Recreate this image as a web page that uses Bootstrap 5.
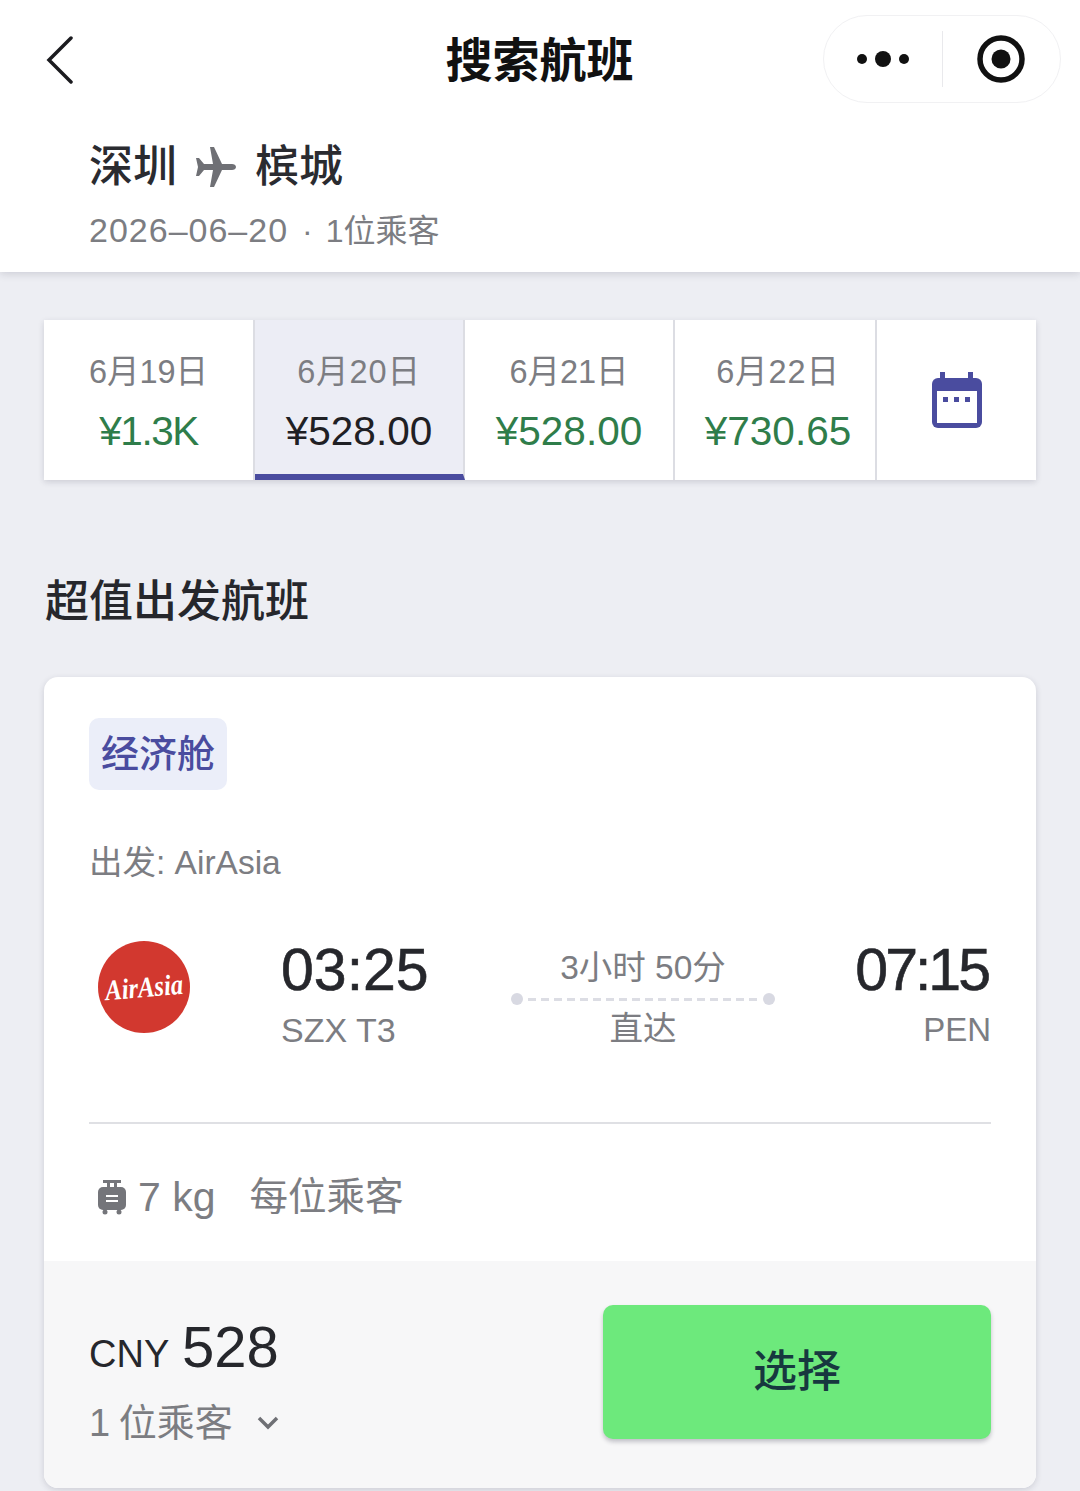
<!DOCTYPE html>
<html lang="zh-CN">
<head>
<meta charset="utf-8">
<title>搜索航班</title>
<link rel="stylesheet" href="https://cdn.jsdelivr.net/npm/bootstrap@5.3.0/dist/css/bootstrap.min.css">
<style>
html,body{height:1491px;overflow:hidden}
body{background:#edeef3;font-family:"Liberation Sans","Noto Sans CJK SC",sans-serif;color:#1f2024}
.hdr{background:#fff;height:272px;box-shadow:0 2px 8px rgba(40,40,60,.16)}
.topbar{height:137px;padding:15px 19px 0 46px}
.back-col{width:212px;height:90px}
.ttl{flex:1;text-align:center;font-size:47px;font-weight:700;color:#111;line-height:92px;margin-left:-2px}
.capsule{width:238px;height:88px;border:1px solid #f1f1f3;border-radius:44px}
.cap-l{width:119px;height:56px;border-right:1px solid #e9e9ec}
.cap-r{width:118px}
.route{padding-left:89px;font-size:44px;font-weight:500;line-height:60px;color:#2a2b30;gap:19px}
.sub{padding-left:89px;font-size:32px;color:#7c7d82;line-height:44px;margin-top:11px}
.sub-date{font-size:34px;letter-spacing:1px}
.sub-dot{margin:0 13px 0 14px}
.strip{margin:48px 44px 0;height:160px;background:#fff;box-shadow:0 2px 6px rgba(40,40,60,.16)}
.dcell{height:160px;border-right:2px solid #dcdde3;text-align:center;padding-top:30px}
.w1{width:211px}.w2{width:210px}.w3{width:210px}.w4{width:202px;padding-left:6px}
.w5{width:159px;height:160px}
.dcell.on{background:#ecedf5;border-bottom:6px solid #4a4c9f}
.dday{font-size:32.500px;line-height:44px;color:#7c7d82}
.dday-wide{letter-spacing:.9px}
.dprice{font-size:40.500px;line-height:50px;margin-top:12px;color:#2f7d4a}
.dprice-tight{letter-spacing:-1.500px}
.on .dprice{color:#1f2024}
.sect{margin:94px 0 0 45px;font-size:44px;font-weight:500;line-height:56px;color:#26272c}
.fcard{margin:47px 44px 0;height:811px;background:#fff;border-radius:14px;box-shadow:0 2px 6px rgba(40,40,60,.16);overflow:hidden}
.fbody{padding:41px 45px 0;height:584px}
.cabin{width:138px;height:72px;background:#ebeef9;color:#4a4c9f;font-size:38px;font-weight:500;line-height:72px;text-align:center;border-radius:10px}
.op{font-size:33.500px;line-height:44px;color:#7c7d82;margin-top:51px}
.times{margin-top:53px;height:120px}
.logo-col{width:192px;padding:2px 0 0 8px}
.dep-col{width:230px}
.tm{font-size:59px;line-height:64px;color:#26272c;-webkit-text-stroke:.6px #26272c}
.tm-tight{letter-spacing:-3px;margin-right:3px}
.ap{font-size:34px;line-height:44px;color:#7c7d82;margin-top:6px}
.ap-small{font-size:33px}
.mid-col{width:264px;text-align:center;font-size:33.500px;line-height:44px;color:#7c7d82;padding-top:8px}
.dotline{height:14px;margin:2px 0 1px}
.ddot{width:12px;height:12px;border-radius:50%;background:#d8d9e2}
.dash{height:3px;margin:0 5px;background:repeating-linear-gradient(90deg,#dcdde4 0 8px,transparent 8px 13px)}
.arr-col{width:216px;text-align:right}
.rule{border-top:2px solid #dfe0e4;margin-top:64px}
.bag{margin:48px 0 0 8px;font-size:41px;line-height:50px;color:#7c7d82}
.bag-icon{margin-right:11px}
.bag-txt{margin-left:34px;font-size:38.500px}
.ffoot{height:227px;background:#f7f7f8;padding:44px 45px 0}
.cny{font-size:38px;line-height:60px;color:#26272c;margin-top:12px}
.cny b{font-size:58px;font-weight:400;margin-left:3px}
.pax{font-size:38px;line-height:50px;color:#7c7d82;margin-top:14px;word-spacing:-2px}
.pick{width:388px;height:134px;background:#6de97c;border:0;border-radius:10px;box-shadow:0 3px 4px rgba(40,40,60,.25);font-size:44px;font-weight:500;color:#17383f}
.pick:hover,.pick:active{background:#6de97c!important;color:#17383f!important}
</style>
</head>
<body>
<div class="hdr">
  <div class="topbar d-flex align-items-start">
    <div class="back-col d-flex align-items-center">
      <svg width="30" height="48" viewBox="0 0 30 48"><path d="M25 2 3 24l22 22" fill="none" stroke="#1b1b1f" stroke-width="3.500" stroke-linecap="round"/></svg>
    </div>
    <div class="ttl">搜索航班</div>
    <div class="capsule d-flex align-items-center">
      <div class="cap-l d-flex align-items-center justify-content-center">
        <svg width="54" height="20" viewBox="0 0 54 20"><circle cx="6" cy="10" r="5" fill="#111"/><circle cx="27" cy="10" r="8" fill="#111"/><circle cx="48" cy="10" r="5" fill="#111"/></svg>
      </div>
      <div class="cap-r d-flex align-items-center justify-content-center">
        <svg width="48" height="48" viewBox="0 0 48 48"><circle cx="24" cy="24" r="21" fill="none" stroke="#111" stroke-width="5.500"/><circle cx="24" cy="24" r="9.500" fill="#111"/></svg>
      </div>
    </div>
  </div>
  <div class="route d-flex align-items-center">
    <span>深圳</span>
    <svg width="40" height="40" viewBox="0 0 40 40"><path d="M40 20c0-2-2-3-4-3H26L18 0h-4l3 17H8L3 11H0l2 9-2 9h3l5-6h9l-3 17h4l8-17h10c2 0 4-1 4-3z" fill="#6f7075"/></svg>
    <span>槟城</span>
  </div>
  <div class="sub"><span class="sub-date">2026–06–20</span><span class="sub-dot">·</span><span>1位乘客</span></div>
</div>

<div class="strip d-flex">
  <div class="dcell w1"><div class="dday">6月19日</div><div class="dprice dprice-tight">¥1.3K</div></div>
  <div class="dcell w2 on"><div class="dday dday-wide">6月20日</div><div class="dprice">¥528.00</div></div>
  <div class="dcell w3"><div class="dday">6月21日</div><div class="dprice">¥528.00</div></div>
  <div class="dcell w4"><div class="dday dday-wide">6月22日</div><div class="dprice">¥730.65</div></div>
  <div class="w5 d-flex align-items-center justify-content-center">
    <svg width="50" height="56" viewBox="0 0 50 56"><rect x="8" y="0" width="5" height="9" fill="#4a4c9f"/><rect x="36" y="0" width="5" height="9" fill="#4a4c9f"/><rect x="0" y="6" width="50" height="50" rx="6" fill="#4a4c9f"/><rect x="5" y="19" width="40" height="32" fill="#fff"/><rect x="11" y="25" width="5" height="5" fill="#4a4c9f"/><rect x="22" y="25" width="5" height="5" fill="#4a4c9f"/><rect x="33" y="25" width="5" height="5" fill="#4a4c9f"/></svg>
  </div>
</div>

<div class="sect">超值出发航班</div>

<div class="fcard">
  <div class="fbody">
    <div class="cabin">经济舱</div>
    <div class="op">出发: AirAsia</div>
    <div class="times d-flex">
      <div class="logo-col">
        <svg width="94" height="94" viewBox="0 0 94 94" overflow="visible"><circle cx="47" cy="47" r="46" fill="#d2382f"/><text x="47" y="57" text-anchor="middle" font-family="Liberation Serif" font-style="italic" font-weight="700" font-size="29" fill="#fff" textLength="78" lengthAdjust="spacingAndGlyphs" transform="rotate(-5 47 47)">AirAsia</text></svg>
      </div>
      <div class="dep-col"><div class="tm">03:25</div><div class="ap">SZX T3</div></div>
      <div class="mid-col">
        <div>3小时 50分</div>
        <div class="dotline d-flex align-items-center"><span class="ddot"></span><span class="dash flex-grow-1"></span><span class="ddot"></span></div>
        <div>直达</div>
      </div>
      <div class="arr-col"><div class="tm tm-tight">07:15</div><div class="ap ap-small">PEN</div></div>
    </div>
    <div class="rule"></div>
    <div class="bag d-flex align-items-center">
      <svg class="bag-icon" width="30" height="36" viewBox="0 0 30 36"><path d="M6 1h18v3h-4v5h-3V4h-4v5h-3V4H6z" fill="#74757a"/><rect x="1" y="8" width="28" height="23" rx="5" fill="#74757a"/><rect x="9" y="16" width="12" height="2" fill="#fff"/><rect x="9" y="21" width="12" height="2" fill="#fff"/><circle cx="8" cy="33" r="2.500" fill="#74757a"/><circle cx="22" cy="33" r="2.500" fill="#74757a"/></svg>
      <span>7 kg</span><span class="bag-txt">每位乘客</span>
    </div>
  </div>
  <div class="ffoot d-flex justify-content-between align-items-start">
    <div>
      <div class="cny">CNY <b>528</b></div>
      <div class="pax d-flex align-items-center"><span>1 位乘客</span>
        <svg class="ms-4" width="22" height="14" viewBox="0 0 22 14"><path d="M2 2l9 9 9-9" fill="none" stroke="#6f7075" stroke-width="3.500"/></svg>
      </div>
    </div>
    <button class="btn pick" type="button">选择</button>
  </div>
</div>
<script src="https://cdn.jsdelivr.net/npm/bootstrap@5.3.0/dist/js/bootstrap.bundle.min.js"></script>
</body>
</html>
